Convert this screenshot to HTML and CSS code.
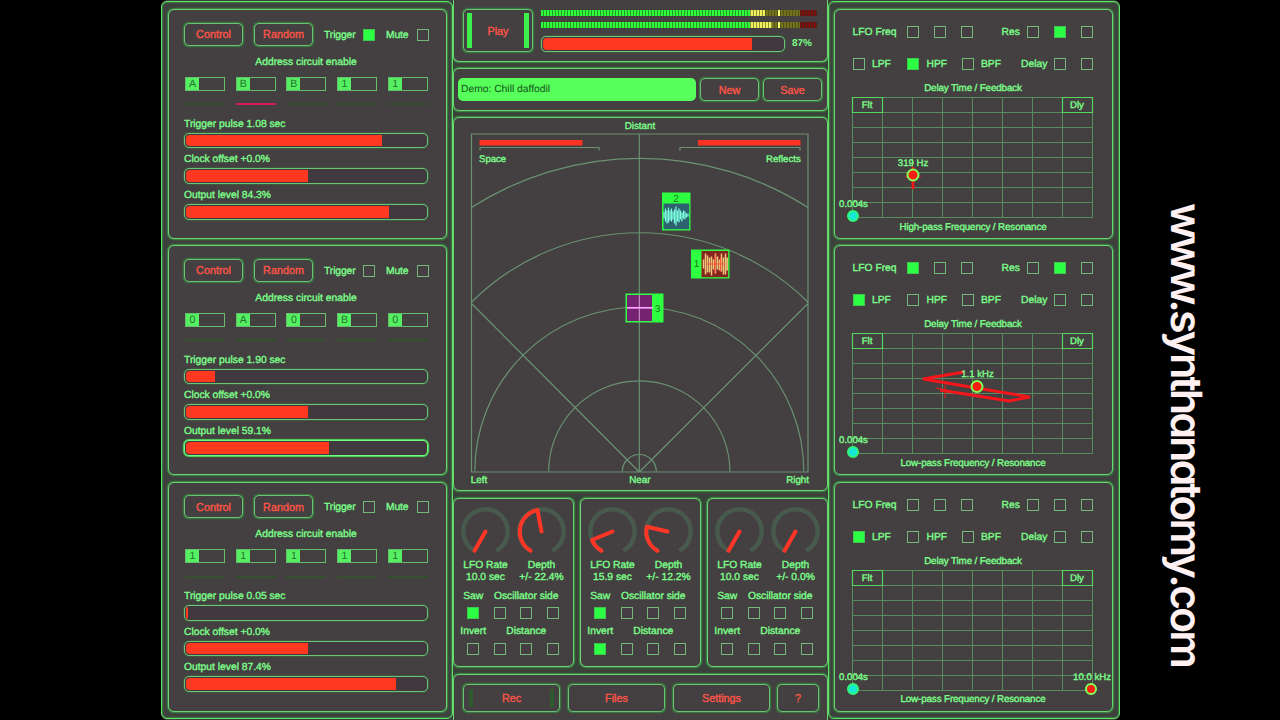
FILE: index.html
```html
<!DOCTYPE html>
<html lang="en">
<head>
<meta charset="utf-8">
<title>Synth</title>
<link rel="stylesheet" href="styles.css">
</head>
<body>
<svg class="defs" width="0" height="0" aria-hidden="true">
  <defs>
    <path id="grid" d="M.5 .5H240.5M.5 15.5H240.5M.5 30.5H240.5M.5 45.5H240.5M.5 60.5H240.5M.5 75.5H240.5M.5 90.5H240.5M.5 105.5H240.5M.5 120.5H240.5M.5 .5V120.5M30.5 .5V120.5M60.5 .5V120.5M90.5 .5V120.5M120.5 .5V120.5M150.5 .5V120.5M180.5 .5V120.5M210.5 .5V120.5M240.5 .5V120.5"/>
    <path id="corners" d="M.5 .5H30.5V15.5H.5ZM210.5 .5H240.5V15.5H210.5Z"/>
    <path id="ring" d="M-11 19.3A22.2 22.2 0 1 1 11 19.3"/>
  </defs>
</svg>
<div class="app">
  <section class="column column-left">
    <div class="panel voice">
      <div class="voice-head"><button class="btn">Control</button><button class="btn">Random</button><span class="lab trig">Trigger</span><i class="box on"></i><span class="lab mute">Mute</span><i class="box"></i></div>
      <div class="voice-title">Address circuit enable</div>
      <div class="cells"><div class="cell"><b>A</b></div><div class="cell"><b>B</b></div><div class="cell"><b>B</b></div><div class="cell"><b>1</b></div><div class="cell"><b>1</b></div></div>
      <div class="leds"><i></i><i class="lit"></i><i></i><i></i><i></i></div>
      <label>Trigger pulse 1.08 sec</label><div class="slider"><div class="fill" style="width:81.5%"></div></div>
      <label>Clock offset +0.0%</label><div class="slider"><div class="fill" style="width:51%"></div></div>
      <label>Output level 84.3%</label><div class="slider"><div class="fill" style="width:84.6%"></div></div>
    </div>
    <div class="panel voice">
      <div class="voice-head"><button class="btn">Control</button><button class="btn">Random</button><span class="lab trig">Trigger</span><i class="box"></i><span class="lab mute">Mute</span><i class="box"></i></div>
      <div class="voice-title">Address circuit enable</div>
      <div class="cells"><div class="cell"><b>0</b></div><div class="cell"><b>A</b></div><div class="cell"><b>0</b></div><div class="cell"><b>B</b></div><div class="cell"><b>0</b></div></div>
      <div class="leds"><i></i><i></i><i></i><i></i><i></i></div>
      <label>Trigger pulse 1.90 sec</label><div class="slider"><div class="fill" style="width:12%"></div></div>
      <label>Clock offset +0.0%</label><div class="slider"><div class="fill" style="width:51%"></div></div>
      <label>Output level 59.1%</label><div class="slider active"><div class="fill" style="width:59.6%"></div></div>
    </div>
    <div class="panel voice">
      <div class="voice-head"><button class="btn">Control</button><button class="btn">Random</button><span class="lab trig">Trigger</span><i class="box"></i><span class="lab mute">Mute</span><i class="box"></i></div>
      <div class="voice-title">Address circuit enable</div>
      <div class="cells"><div class="cell"><b>1</b></div><div class="cell"><b>1</b></div><div class="cell"><b>1</b></div><div class="cell"><b>1</b></div><div class="cell"><b>1</b></div></div>
      <div class="leds"><i></i><i></i><i></i><i></i><i></i></div>
      <label>Trigger pulse 0.05 sec</label><div class="slider"><div class="fill" style="width:1%"></div></div>
      <label>Clock offset +0.0%</label><div class="slider"><div class="fill" style="width:51%"></div></div>
      <label>Output level 87.4%</label><div class="slider"><div class="fill" style="width:87.7%"></div></div>
    </div>
  </section>

  <main class="center">
    <div class="panel transport">
      <button class="btn play"><i></i>Play<i></i></button>
      <div class="levels">
        <div class="meter"><i class="m-green"></i><i class="m-yellow" style="width:15px"></i><i class="m-dim"></i><i class="m-peak"></i><i class="m-dim2"></i><i class="m-red"></i></div>
        <div class="meter"><i class="m-green"></i><i class="m-yellow" style="width:22px"></i><i class="m-dim"></i><i class="m-peak"></i><i class="m-dim2"></i><i class="m-red"></i></div>
        <div class="volume"><div class="slider"><div class="fill" style="width:87%"></div></div><span class="lab pct">87%</span></div>
      </div>
    </div>
    <div class="panel preset"><div class="name">Demo: Chill daffodil</div><button class="btn">New</button><button class="btn">Save</button></div>
    <div class="panel surround">
      <div class="lab distant">Distant</div>
      <svg class="field" width="337" height="338" viewBox="471.5 134.5 337 338">
        <g class="thin">
          <path d="M472 134.5H808.5V472.5H472ZM639.8 134.5V472.5M639.8 472.5L472 304M639.8 472.5L808.5 304"/>
          <path d="M622.8 472A17 17 0 0 1 656.8 472M549.2 472A90.6 90.6 0 0 1 730.4 472M475.3 472A164.5 164.5 0 0 1 804.3 472M472 302.7A238.5 238.5 0 0 1 808.5 302.7M472 208A312.5 312.5 0 0 1 808.5 208"/>
          <path d="M480.5 151V148H599.5V151M680.5 151V148H800.5V151"/>
        </g>
        <path class="redfill" d="M480 140.5H583V146H480ZM698.5 140.5H801V146H698.5Z"/>
        <text x="479.5" y="162.5">Space</text><text x="801.2" y="162.5" text-anchor="end">Reflects</text>
        <g>
          <path class="node" d="M662.5 193H691V231H662.5Z"/><path fill="#2e6270" d="M664 204H689.7V229.7H664Z"/>
          <path stroke="#7dffe0" stroke-width="1.2" d="M664.5 212V219M666 209V222M667.500 211V224M669 208V223M670.500 211V221M672 209V222M673.500 212V220M675 210V224M676.500 207V226M678 211V222M679.500 209V223M681 211V220M682.500 213V222M684 211V219M685.500 212V220M687 214V218M688.500 214V217"/>
          <text class="dark" x="676.5" y="202" text-anchor="middle">2</text>
        </g>
        <g>
          <path class="node" d="M691.500 250H730V279H691.500Z"/><path fill="#862420" d="M702 251.500H728.700V277.700H702Z"/>
          <path stroke="#edc478" stroke-width="1.500" d="M704 260V269M706 254V275M708 256V273M710 258V273M712 257V276M714 260V270M716 254V274M718 257V270M720 260V271M722 254V272M724 258V275M726 254V275M727.700 258V271"/>
          <path stroke="#ff5038" stroke-width="1.200" d="M707 264.500H725M715.500 255V274M721 258V272"/>
          <text class="dark" x="697" y="267.500" text-anchor="middle">1</text>
        </g>
        <g>
          <path class="node" d="M626 294H664V323H626Z"/><path fill="#752271" d="M627.500 295.500H652.500V321.500H627.500Z"/>
          <path stroke="#d9a0d6" d="M639.800 295.500V321.500"/><path stroke="#ffa5ff" stroke-width="1.700" d="M627.500 308.300H653.500"/>
          <text class="dark" x="658.300" y="312" text-anchor="middle">3</text>
        </g>
      </svg>
      <div class="near-row"><span>Left</span><span>Near</span><span>Right</span></div>
    </div>
    <div class="lfos">
      <div class="panel lfo">
        <svg class="dials" width="121" height="50" viewBox="0 0 121 50">
          <g transform="translate(32.500 27.500)"><use href="#ring" class="ring"/><path class="needle" d="M0 0L-11 19.300"/></g>
          <g transform="translate(88.500 27.500)"><use href="#ring" class="ring"/><path class="needle" d="M0 0L-4 -21.500A22.200 22.200 0 0 0 -11 19.300"/></g>
        </svg>
        <div class="pair"><span>LFO Rate<br>10.0 sec</span><span>Depth<br>+/- 22.4%</span></div>
        <div class="mods"><span>Saw</span><span class="wide">Oscillator side</span><i class="box on"></i><i class="box"></i><i class="box"></i><i class="box"></i><span>Invert</span><span class="wide">Distance</span><i class="box"></i><i class="box"></i><i class="box"></i><i class="box"></i></div>
      </div>
      <div class="panel lfo">
        <svg class="dials" width="121" height="50" viewBox="0 0 121 50">
          <g transform="translate(32.500 27.500)"><use href="#ring" class="ring"/><path class="needle" d="M0 0L-20.500 8.500A22.200 22.200 0 0 0 -11 19.300"/></g>
          <g transform="translate(88.500 27.500)"><use href="#ring" class="ring"/><path class="needle" d="M-1 0L-21.700 -4.800A22.200 22.200 0 0 0 -11 19.300"/></g>
        </svg>
        <div class="pair"><span>LFO Rate<br>15.9 sec</span><span>Depth<br>+/- 12.2%</span></div>
        <div class="mods"><span>Saw</span><span class="wide">Oscillator side</span><i class="box on"></i><i class="box"></i><i class="box"></i><i class="box"></i><span>Invert</span><span class="wide">Distance</span><i class="box on"></i><i class="box"></i><i class="box"></i><i class="box"></i></div>
      </div>
      <div class="panel lfo">
        <svg class="dials" width="121" height="50" viewBox="0 0 121 50">
          <g transform="translate(32.500 27.500)"><use href="#ring" class="ring"/><path class="needle" d="M0 0L-11 19.300"/></g>
          <g transform="translate(88.500 27.500)"><use href="#ring" class="ring"/><path class="needle" d="M0 0L-11 19.300"/></g>
        </svg>
        <div class="pair"><span>LFO Rate<br>10.0 sec</span><span>Depth<br>+/- 0.0%</span></div>
        <div class="mods"><span>Saw</span><span class="wide">Oscillator side</span><i class="box"></i><i class="box"></i><i class="box"></i><i class="box"></i><span>Invert</span><span class="wide">Distance</span><i class="box"></i><i class="box"></i><i class="box"></i><i class="box"></i></div>
      </div>
    </div>
    <div class="panel footer"><button class="btn rec"><i></i>Rec<i></i></button><button class="btn">Files</button><button class="btn">Settings</button><button class="btn">?</button></div>
  </main>

  <section class="column column-right">
    <div class="panel filter">
      <div class="opts"><span class="t-lfo">LFO Freq</span><i class="box"></i><i class="box"></i><i class="box"></i><span class="t-res">Res</span><i class="box"></i><i class="box on"></i><i class="box"></i></div>
      <div class="opts modes"><i class="box"></i><span class="t-mode">LPF</span><i class="box on"></i><span class="t-mode">HPF</span><i class="box"></i><span class="t-mode">BPF</span><span class="t-delay">Delay</span><i class="box"></i><i class="box"></i></div>
      <div class="caption">Delay Time / Feedback</div>
      <svg class="graph" width="241" height="121" viewBox="0 0 241 121">
        <use href="#grid" class="grid"/><use href="#corners" class="corners"/>
        <text x="15" y="11" text-anchor="middle">Flt</text><text x="225" y="11" text-anchor="middle">Dly</text>
        <path class="trace" d="M61 70V92"/><path class="trace-thin" d="M53 80H69"/><circle class="knob" cx="61" cy="78" r="5.500"/>
        <text x="61" y="68.500" text-anchor="middle">319 Hz</text>
        <circle class="cyan" cx="1" cy="119" r="5"/><text x="1.500" y="109.500" text-anchor="middle">0.004s</text>
      </svg>
      <div class="caption">High-pass Frequency / Resonance</div>
    </div>
    <div class="panel filter">
      <div class="opts"><span class="t-lfo">LFO Freq</span><i class="box on"></i><i class="box"></i><i class="box"></i><span class="t-res">Res</span><i class="box"></i><i class="box on"></i><i class="box"></i></div>
      <div class="opts modes"><i class="box on"></i><span class="t-mode">LPF</span><i class="box"></i><span class="t-mode">HPF</span><i class="box"></i><span class="t-mode">BPF</span><span class="t-delay">Delay</span><i class="box"></i><i class="box"></i></div>
      <div class="caption">Delay Time / Feedback</div>
      <svg class="graph" width="241" height="121" viewBox="0 0 241 121">
        <use href="#grid" class="grid"/><use href="#corners" class="corners"/>
        <text x="15" y="11" text-anchor="middle">Flt</text><text x="225" y="11" text-anchor="middle">Dly</text>
        <path class="trace" d="M112 39L71 46L178 64L157 68L88 57"/><path class="trace-thin" d="M84 55L112 61M93 52V65"/><circle class="knob" cx="125" cy="53.500" r="5.500"/>
        <text x="125.500" y="44" text-anchor="middle">1.1 kHz</text>
        <circle class="cyan" cx="1" cy="119" r="5"/><text x="1.500" y="109.500" text-anchor="middle">0.004s</text>
      </svg>
      <div class="caption">Low-pass Frequency / Resonance</div>
    </div>
    <div class="panel filter">
      <div class="opts"><span class="t-lfo">LFO Freq</span><i class="box"></i><i class="box"></i><i class="box"></i><span class="t-res">Res</span><i class="box"></i><i class="box"></i><i class="box"></i></div>
      <div class="opts modes"><i class="box on"></i><span class="t-mode">LPF</span><i class="box"></i><span class="t-mode">HPF</span><i class="box"></i><span class="t-mode">BPF</span><span class="t-delay">Delay</span><i class="box"></i><i class="box"></i></div>
      <div class="caption">Delay Time / Feedback</div>
      <svg class="graph" width="241" height="121" viewBox="0 0 241 121">
        <use href="#grid" class="grid"/><use href="#corners" class="corners"/>
        <text x="15" y="11" text-anchor="middle">Flt</text><text x="225" y="11" text-anchor="middle">Dly</text>
        <circle class="knob" cx="239" cy="119" r="5"/><text x="240" y="109.500" text-anchor="middle">10.0 kHz</text>
        <circle class="cyan" cx="1" cy="119" r="5"/><text x="1.500" y="109.500" text-anchor="middle">0.004s</text>
      </svg>
      <div class="caption">Low-pass Frequency / Resonance</div>
    </div>
  </section>
</div>
<svg class="site" width="60" height="480" viewBox="0 0 60 480"><text transform="translate(16 5) rotate(90)" textLength="466">www.synthanatomy.com</text></svg>
</body>
</html>
```
FILE: styles.css
```css
* { box-sizing: border-box; }
html, body { margin: 0; height: 720px; overflow: hidden; background: #000; }
body {
  display: flex; padding-left: 161px;
  font: 10.3px/12px "Liberation Sans", Arial, sans-serif;
  text-rendering: geometricPrecision;
  color: #7cff8a; -webkit-text-stroke: .35px currentColor;
}
.defs { position: absolute; }
i { font-style: normal; display: block; flex: none; }
svg { display: block; overflow: visible; }
svg text { fill: #7cff8a; stroke: #7cff8a; stroke-width: .35px; font-size: 9.600px; }
.app { display: grid; grid-template-columns: 292px 375px 292px; width: 959px; height: 720px; flex: none; background: #39413a; border-radius: 6px; }
.panel { border: 1px solid #69d671; border-radius: 6px; background: #443f41; box-shadow: 0 0 1.500px .5px #3d8d45; }
.column { display: flex; flex-direction: column; gap: 6.300px; height: 718px; margin-top: 1px; padding: 7px 5px 7px 6px; border: 1px solid #5ee367; border-radius: 6px; background: #3d403d; box-shadow: inset 0 0 1.500px .5px #3fa548; }
.column-right { padding: 7px 6px 7px 5px; }
.column .panel { height: 230px; flex: none; }

.btn { font: inherit; font-size: 10.800px; color: #ff5547; -webkit-text-stroke: .35px #ff5547; background: #443f41; border: 1px solid #6cc274; box-shadow: 0 0 1.500px .3px #38803f; border-radius: 5px; padding: 0; display: flex; align-items: center; justify-content: center; flex: none; width: 59px; height: 23px; }
.box { width: 12px; height: 12px; border: 1px solid #74b87a; background: #443d42; }
.box.on { background: #2dff45; border-color: #41c74d; }

.voice { padding: 12.500px 14px 0 15px; }
.voice-head { display: flex; gap: 11px; height: 23px; align-items: center; }
.voice-head .lab { padding-top: 3px; white-space: nowrap; }
.voice-head .box { margin-top: 1px; }
.voice-head .trig { width: 28px; letter-spacing: -.1px; }
.voice-head .mute { width: 20px; letter-spacing: -.1px; }
.voice-title { height: 31px; line-height: 34px; width: 244px; text-align: center; }
.cells, .leds { display: flex; gap: 10.700px; margin-left: 1px; }
.cell { width: 40px; height: 14px; border: 1px solid #66bf6d; }
.cell b { display: block; width: 13px; height: 12px; background: #55f062; color: #23722d; font-size: 10.600px; font-weight: 400; line-height: 12.500px; text-align: center; -webkit-text-stroke: 0; }
.leds { height: 22px; align-items: center; padding-top: 5px; }
.leds i { width: 40px; height: 2px; background: #35502f; }
.leds .lit { background: #d51c53; }
.voice label { display: block; height: 20px; line-height: 24.500px; }
.slider { width: 244px; height: 15.700px; border: 1px solid #6fc577; box-shadow: 0 0 1.500px .3px #38803f; border-radius: 5px; overflow: hidden; padding: 1px; background: #40393f; }
.slider.active { border-color: #70ff7c; box-shadow: 0 0 1px 1px #52d95d; }
.fill { height: 100%; background: #ff3920; border-radius: 4px 0 0 4px; }

.center { display: flex; flex-direction: column; width: 375px; height: 720px; overflow: hidden; }
.transport { height: 62px; flex: none; border-top: 0; border-radius: 0 0 6px 6px; display: flex; padding: 9px 0 0 9px; }
.play { width: 70px; height: 43px; justify-content: space-between; padding: 0 3px; }
.play i { width: 5px; height: 35px; background: #3df04c; }
.levels { margin-left: 8px; padding-top: 1px; }
.meter { display: flex; height: 6px; width: 276px; margin-bottom: 6px; position: relative; }
.meter::after { content: ""; position: absolute; inset: 0; background: repeating-linear-gradient(90deg, transparent 0 2px, rgba(30, 60, 20, .5) 2px 3px); }
.m-green { width: 209px; background: #30fb3a; }
.m-yellow { background: #f4f05b; }
.m-dim { flex: 1; background: #77701e; }
.m-peak { width: 2px; background: #ffff70; }
.m-dim2 { width: 20px; background: #77701e; }
.m-red { width: 17px; background: #7c0d12; }
.volume { display: flex; align-items: center; gap: 7px; margin-top: 8px; }
.volume .pct { font-weight: 700; font-size: 10px; -webkit-text-stroke: 0; }
.preset { height: 43px; flex: none; margin-top: 6px; display: flex; padding: 9px 0 0 4px; }
.name { width: 238px; height: 23px; margin-right: 4px; border-radius: 5px; background: #57ff5b; color: #17621d; -webkit-text-stroke: .1px #17621d; padding: 0 3px; line-height: 23.500px; }
.preset .btn + .btn { margin-left: 4px; }
.surround { height: 374px; flex: none; margin-top: 6px; padding: 2px 18px 0 16.800px; font-size: 9.800px; }
.distant { text-align: center; height: 14px; line-height: 14px; }
.thin { fill: none; stroke: #6a9272; stroke-width: 1.200; }
.redfill { fill: #fb3320; }
.node { fill: #2eff40; }
svg text.dark { fill: #17781d; stroke: none; font-size: 10px; }
.near-row { display: grid; grid-template-columns: 1fr 1fr 1fr; text-align: center; line-height: 18px; }
.near-row :first-child { text-align: left; }
.near-row :last-child { text-align: right; }
.lfos { display: flex; gap: 6px; margin-top: 7px; flex: none; }
.lfo { width: 121px; height: 169px; padding-top: 4.500px; }
.dials { margin-left: -1px; }
.ring { fill: none; stroke: #475a4d; stroke-width: 4.500; }
.needle { fill: none; stroke: #ff3525; stroke-width: 4; stroke-linecap: round; stroke-linejoin: round; }
.pair { display: grid; grid-template-columns: 56px 56px; margin-left: 3.500px; text-align: center; white-space: nowrap; margin-top: 6px; line-height: 12.300px; }
.mods { display: grid; grid-template-columns: repeat(4, 26.500px); grid-template-rows: 22px 12px 24px 12px; justify-items: center; align-items: center; margin: 1px 0 0 6px; white-space: nowrap; }
.mods span { padding-top: 2px; }
.mods .wide { grid-column: span 3; }
.footer { display: flex; gap: 8px; margin-top: 7px; height: 60px; flex: none; padding: 9px 0 0 9px; }
.footer .btn { width: 97px; height: 28px; }
.footer .btn:last-child { width: 42px; margin-left: -1px; }
.footer .rec { justify-content: space-between; padding: 0 5px; }
.rec i { width: 4px; height: 18px; background: #2d5b2d; }

.filter { padding: 14px 0 0 17.500px; }
.opts { display: flex; align-items: center; height: 16px; white-space: nowrap; }
.opts span { padding-top: 2px; }
.opts .box + .box { margin-left: 15px; }
.t-lfo { width: 54px; }
.t-res { width: 25px; margin-left: 29px; }
.t-mode { width: 35px; margin-left: 7.500px; }
.modes { margin-top: 16px; }
.t-delay { width: 33px; margin-left: 5px; }
.caption { width: 241px; text-align: center; line-height: 18px; height: 16px; font-size: 9.800px; letter-spacing: -.12px; }
.modes + .caption { margin-top: 8px; }
.graph { margin: 1px 0 .5px -.5px; }
.grid { fill: none; stroke: #578d5c; stroke-width: 1; }
.corners { fill: none; stroke: #55d75f; stroke-width: 1.200; }
.trace { fill: none; stroke: #f5161b; stroke-width: 2.800; }
.trace-thin { fill: none; stroke: #f5161b; stroke-width: 1; }
.knob { fill: #fb1d12; stroke: #82ff55; stroke-width: 2; }
.cyan { fill: #16e8d5; stroke: #31f675; stroke-width: 2; }
.site { margin: 198px 0 0 35px; flex: none; }
.site text { font: 600 43px Inter, sans-serif; font-feature-settings: "cv11"; fill: #fff0f1; stroke: none; }
```
